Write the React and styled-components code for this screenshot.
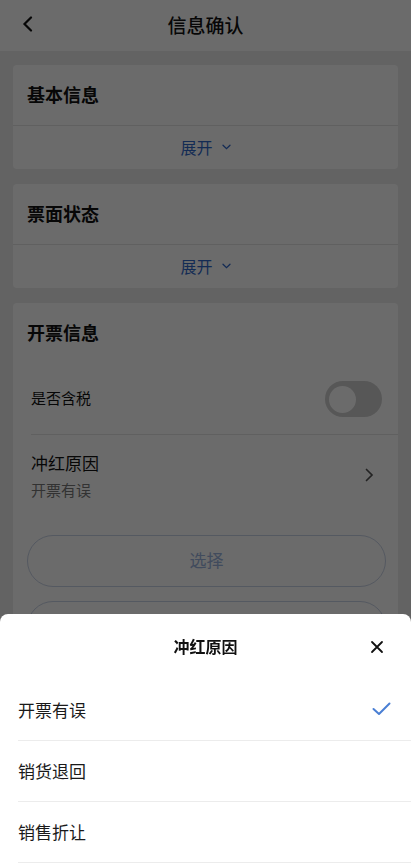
import styled, { createGlobalStyle } from 'styled-components'

const GlobalStyle = createGlobalStyle`
  body {
    margin: 0;
    font-family: 'Noto Sans CJK SC', 'Noto Sans', sans-serif;
    background: #ececec;
  }
`

const Page = styled.div`
  min-height: 864px;
  background: #ececec;
  overflow: hidden;
`

const NavBar = styled.div`
  height: 51px;
  background: #fff;
  display: flex;
  align-items: center;
  justify-content: center;
  position: relative;
`

const NavTitle = styled.div`
  font-size: 19px;
  font-weight: 500;
  color: #111;
  padding-bottom: 3px;
`

const BackButton = styled.div`
  position: absolute;
  left: 18px;
  top: 14px;
  width: 18px;
  height: 20px;
  display: flex;
  align-items: center;
  justify-content: center;
`

const Content = styled.div`
  padding: 14px 13px;
  display: flex;
  flex-direction: column;
  gap: 15px;
`

const Card = styled.div`
  background: #fff;
  border-radius: 4px;
`

const CardTitle = styled.div`
  height: 61px;
  padding: 0 14px 3px;
  box-sizing: border-box;
  display: flex;
  align-items: center;
  font-size: 18px;
  font-weight: 700;
  color: #111;
  border-bottom: ${({ divided }) => (divided ? '1px solid #e4e4e4' : 'none')};
`

const Expand = styled.div`
  height: 43px;
  padding-bottom: 2px;
  box-sizing: border-box;
  display: flex;
  align-items: center;
  justify-content: center;
  gap: 9px;
  color: #2f67c9;
  font-size: 16px;
`

const Row = styled.div`
  margin-left: 18px;
  padding-right: ${({ pr }) => pr}px;
  height: ${({ h }) => h}px;
  box-sizing: border-box;
  padding-bottom: 3px;
  display: flex;
  align-items: center;
  justify-content: space-between;
  border-bottom: ${({ divided }) => (divided ? '1px solid #e4e4e4' : 'none')};
`

const RowLabel = styled.div`
  font-size: ${({ size }) => size}px;
  color: #111;
`

const RowSub = styled.div`
  font-size: 15px;
  color: #777;
  margin-top: 4px;
`

const Toggle = styled.div`
  width: 57px;
  height: 36px;
  margin-top: 3px;
  border-radius: 18px;
  background: #cfcfcf;
  display: flex;
  align-items: center;
  padding: 0 4px;
  box-sizing: border-box;
`

const Knob = styled.div`
  width: 27px;
  height: 27px;
  border-radius: 50%;
  background: #fff;
`

const Buttons = styled.div`
  padding: 18px 12px 20px 14px;
  display: flex;
  flex-direction: column;
  gap: 14px;
`

const PillButton = styled.div`
  height: 52px;
  border-radius: 26px;
  border: 1px solid #c9d3e6;
  box-sizing: border-box;
  padding-bottom: 3px;
  display: flex;
  align-items: center;
  justify-content: center;
  font-size: 17px;
  color: #9bb3dd;
  background: #fff;
`

const Overlay = styled.div`
  position: fixed;
  inset: 0;
  background: rgba(0, 0, 0, 0.58);
`

const Sheet = styled.div`
  position: fixed;
  left: 0;
  right: 0;
  bottom: 0;
  height: 250px;
  background: #fff;
  border-radius: 8px 8px 0 0;
`

const SheetHeader = styled.div`
  height: 66px;
  display: flex;
  align-items: center;
  justify-content: center;
  position: relative;
  font-size: 16px;
  font-weight: 700;
  color: #111;
  padding-bottom: 2px;
  box-sizing: border-box;
`

const CloseButton = styled.div`
  position: absolute;
  right: 27px;
  top: 26px;
  width: 14px;
  height: 14px;
  display: flex;
`

const Option = styled.div`
  margin-left: 18px;
  padding-right: 20px;
  padding-bottom: 2px;
  box-sizing: border-box;
  height: 61px;
  border-bottom: 1px solid #ececec;
  display: flex;
  align-items: center;
  justify-content: space-between;
  font-size: 17px;
  color: #1a1a1a;
`

const ChevronDown = () => (
  <svg width="9" height="6" viewBox="0 0 9 6" fill="none">
    <path d="M1 1.2L4.5 4.7L8 1.2" stroke="#2f67c9" strokeWidth="1.3" strokeLinecap="round" />
  </svg>
)

const options = ['开票有误', '销货退回', '销售折让']

function App() {
  const selected = '开票有误'
  return (
    <Page>
      <GlobalStyle />
      <NavBar>
        <BackButton>
          <svg width="11" height="16" viewBox="0 0 11 16" fill="none">
            <path d="M9 1.5L2.5 8L9 14.5" stroke="#111" strokeWidth="2.2" strokeLinecap="round" />
          </svg>
        </BackButton>
        <NavTitle>信息确认</NavTitle>
      </NavBar>
      <Content>
        <Card>
          <CardTitle divided>基本信息</CardTitle>
          <Expand>
            展开 <ChevronDown />
          </Expand>
        </Card>
        <Card>
          <CardTitle divided>票面状态</CardTitle>
          <Expand>
            展开 <ChevronDown />
          </Expand>
        </Card>
        <Card>
          <CardTitle>开票信息</CardTitle>
          <Row h={71} pr={16} divided>
            <RowLabel size={15}>是否含税</RowLabel>
            <Toggle>
              <Knob />
            </Toggle>
          </Row>
          <Row h={82} pr={24}>
            <div>
              <RowLabel size={17}>冲红原因</RowLabel>
              <RowSub>开票有误</RowSub>
            </div>
            <svg width="10" height="16" viewBox="0 0 10 16" fill="none">
              <path d="M2.5 2.5L8 8L2.5 13.5" stroke="#555" strokeWidth="1.7" strokeLinecap="round" />
            </svg>
          </Row>
          <Buttons>
            <PillButton>选择</PillButton>
            <PillButton />
          </Buttons>
        </Card>
      </Content>
      <Overlay />
      <Sheet>
        <SheetHeader>
          冲红原因
          <CloseButton>
            <svg width="14" height="14" viewBox="0 0 14 14" fill="none">
              <path d="M2 2L12 12M12 2L2 12" stroke="#111" strokeWidth="1.8" strokeLinecap="round" />
            </svg>
          </CloseButton>
        </SheetHeader>
        {options.map((o) => (
          <Option key={o}>
            {o}
            {o === selected && (
              <svg width="19" height="14" viewBox="0 0 19 14" fill="none">
                <path d="M1.5 7L7 12L17.5 1.5" stroke="#4a7fd4" strokeWidth="2" strokeLinecap="round" strokeLinejoin="round" />
              </svg>
            )}
          </Option>
        ))}
      </Sheet>
    </Page>
  )
}

export default App
